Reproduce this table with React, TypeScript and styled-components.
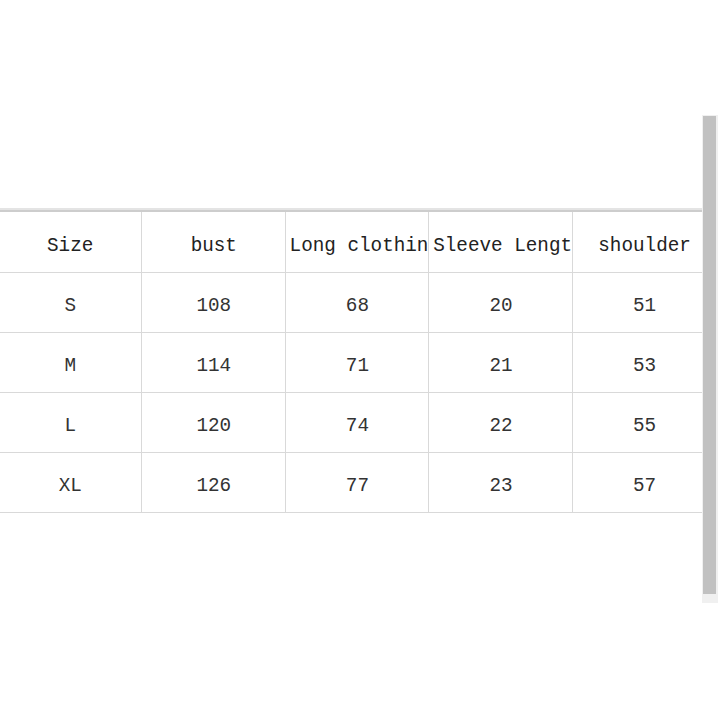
import styled, { createGlobalStyle } from "styled-components";

const columns = ["Size", "bust", "Long clothing", "Sleeve Length", "shoulder"];

const rows = [
  ["S", "108", "68", "20", "51"],
  ["M", "114", "71", "21", "53"],
  ["L", "120", "74", "22", "55"],
  ["XL", "126", "77", "23", "57"],
];

export default function App() {
  return (
    <>
      <GlobalStyle />
      <SPage>
        <STableArea>
          <SHeaderRule />
          <SGrid>
            {columns.map((c) => (
              <SCell key={c} $header>
                {c}
              </SCell>
            ))}
            {rows.map((r) =>
              r.map((v, i) => <SCell key={r[0] + i}>{v}</SCell>)
            )}
          </SGrid>
        </STableArea>
        <SScrollTrack>
          <SScrollThumb />
        </SScrollTrack>
      </SPage>
    </>
  );
}

const GlobalStyle = createGlobalStyle`
  body {
    margin: 0;
    background: #ffffff;
    overflow: hidden;
  }
`;

const SPage = styled.div`
  display: flex;
  align-items: flex-start;
  width: 719px;
  height: 719px;
`;

const STableArea = styled.div`
  width: 702px;
  flex-shrink: 0;
  overflow: hidden;
  padding-top: 208px;
`;

const SHeaderRule = styled.div`
  height: 4px;
  margin-left: -2px;
  width: 720px;
  background: linear-gradient(#e4e4e4 0 50%, #cdcdcd 50% 100%);
`;

const SGrid = styled.div`
  display: grid;
  grid-template-columns: repeat(5, 143.6px);
  margin-left: -1.6px;
  font-family: "Liberation Mono", "DejaVu Sans Mono", monospace;
  font-size: 19.3px;
`;

/* block + nowrap: text wider than the cell starts at the left and is clipped,
   as in the spreadsheet the screenshot came from */
const SCell = styled.div<{ $header?: boolean }>`
  box-sizing: border-box;
  height: ${(p) => (p.$header ? "61px" : "60px")};
  padding: ${(p) => (p.$header ? "8px" : "7px")} 3px 0 4px;
  line-height: 52px;
  text-align: center;
  white-space: nowrap;
  overflow: hidden;
  border-right: 1px solid #d9d9d9;
  border-bottom: 1px solid #d9d9d9;
  color: ${(p) => (p.$header ? "#222" : "#333")};
`;

const SScrollTrack = styled.div`
  margin-top: 115px;
  width: 16px;
  height: 488px;
  box-sizing: border-box;
  padding: 1px 2px 0 1px;
  background: #f0f0f0;
`;

const SScrollThumb = styled.div`
  height: 478px;
  background: #c1c1c1;
`;
